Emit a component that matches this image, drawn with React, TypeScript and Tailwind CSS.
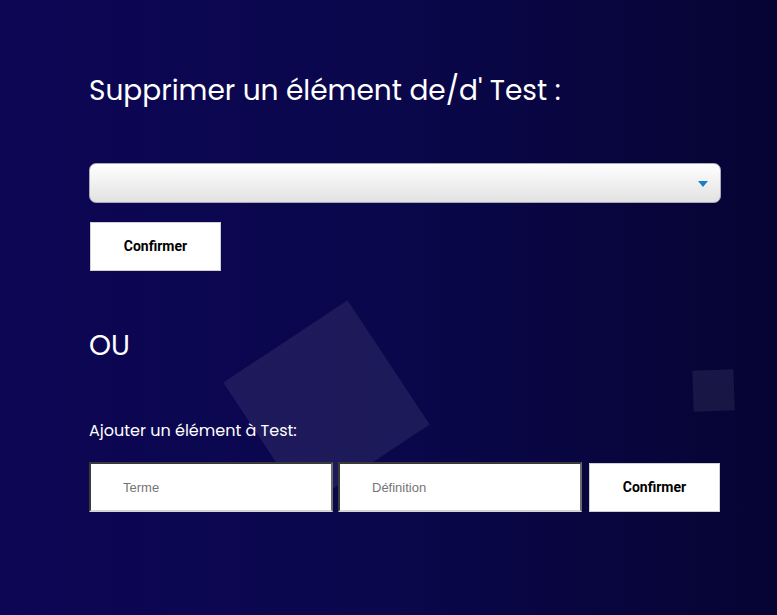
import { useState } from "react";

const heading = "font-['Poppins','Inter','Noto_Sans',sans-serif] text-white";

function Field({ placeholder }: { placeholder: string }) {
  const [value, setValue] = useState("");
  return (
    <input
      value={value}
      onChange={(e) => setValue(e.target.value)}
      placeholder={placeholder}
      className="h-[50px] w-[244px] border-2 border-t-[#3a3a3a] border-l-[#3a3a3a] border-r-[#6b6b6b] border-b-[#d4d4d4] bg-white pl-[32px] font-['Liberation_Sans',Arial,sans-serif] text-[13px] text-black outline-none placeholder:text-[#757575]"
    />
  );
}

function ConfirmButton({ className = "" }: { className?: string }) {
  return (
    <button
      type="button"
      className={
        "h-[49px] w-[131px] border border-[#d0d0d0] bg-white font-['Roboto',Arial,sans-serif] text-[14px] font-bold text-black " +
        className
      }
    >
      Confirmer
    </button>
  );
}

export default function App() {
  return (
    <div className="relative h-[615px] w-full overflow-hidden bg-gradient-to-r from-[#0d0655] via-[#0a074c] to-[#060433]">
      {/* floating squares */}
      <div className="absolute left-[252px] top-[329px] h-[149px] w-[149px] -rotate-[33.5deg] bg-white/[0.08]" />
      <div className="absolute left-[693px] top-[370px] h-[41px] w-[41px] -rotate-2 bg-white/[0.07]" />

      <div className="relative ml-[89px] w-[632px] pt-[72px]">
        <h1 className={heading + " text-[28px] leading-[38px]"}>Supprimer un élément de/d' Test :</h1>

        <div className="relative mt-[53px] h-[40px] rounded-[7px] border border-[#a9a9b8] bg-gradient-to-b from-white to-[#e2e2e2]">
          <span className="absolute right-[12px] top-[17px] h-0 w-0 border-x-[5px] border-t-[6px] border-x-transparent border-t-[#1b7fc4]" />
        </div>

        <ConfirmButton className="ml-[1px] mt-[19px]" />

        <h2 className={heading + " mt-[56px] text-[28px] leading-[38px]"}>OU</h2>

        <p className={heading + " mt-[54px] text-[16px] leading-[24px]"}>Ajouter un élément à Test:</p>

        <div className="mt-[19px] flex items-center">
          <Field placeholder="Terme" />
          <div className="ml-[5px]">
            <Field placeholder="Définition" />
          </div>
          <ConfirmButton className="ml-[7px]" />
        </div>
      </div>
    </div>
  );
}
